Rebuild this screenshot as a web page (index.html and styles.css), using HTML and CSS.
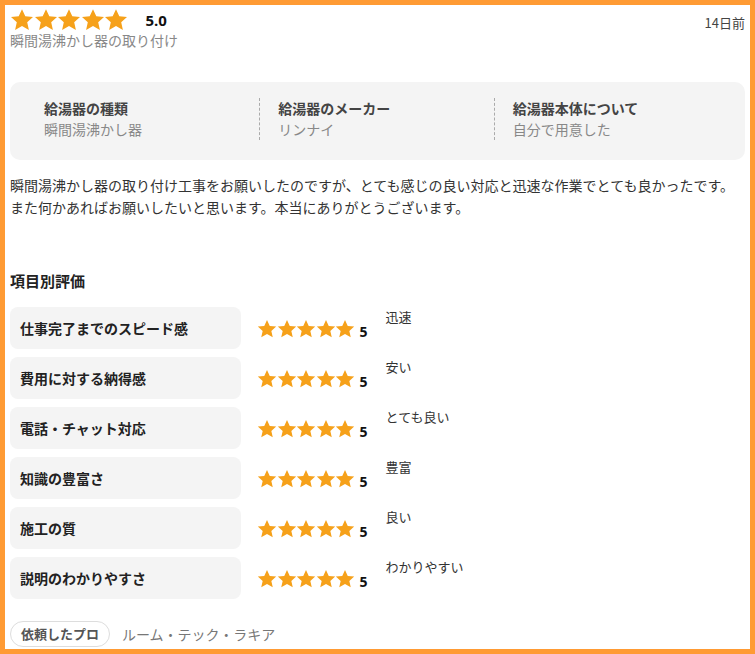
FILE: index.html
```html
<!DOCTYPE html>
<html lang="ja">
<head>
  <meta charset="UTF-8" />
  <meta name="viewport" content="width=device-width, initial-scale=1.0"/>
  <title>口コミ</title>
  <link rel="stylesheet" href="styles.css">
</head>
<body>

<svg width="0" height="0" class="defs">
  <defs>
    <symbol id="star" viewBox="0 0 24 24">
      <path d="M12 1.2l3.3 7.1 7.7.8-5.8 5.2 1.7 7.6L12 18l-6.9 3.9 1.7-7.6L1 9.1l7.7-.8z"/>
    </symbol>
  </defs>
</svg>

<div class="review">
  <div class="head">
    <div class="head-main">
      <div class="rating">
        <div class="stars big">
          <svg><use href="#star"/></svg><svg><use href="#star"/></svg><svg><use href="#star"/></svg><svg><use href="#star"/></svg><svg><use href="#star"/></svg>
        </div>
        <span class="score">5.0</span>
      </div>
      <div class="subject">瞬間湯沸かし器の取り付け</div>
    </div>
    <div class="date">14日前</div>
  </div>

  <div class="info">
    <div class="info-col">
      <div class="info-title">給湯器の種類</div>
      <div class="info-value">瞬間湯沸かし器</div>
    </div>
    <div class="info-col">
      <div class="info-title">給湯器のメーカー</div>
      <div class="info-value">リンナイ</div>
    </div>
    <div class="info-col">
      <div class="info-title">給湯器本体について</div>
      <div class="info-value">自分で用意した</div>
    </div>
  </div>

  <p class="comment">瞬間湯沸かし器の取り付け工事をお願いしたのですが、とても感じの良い対応と迅速な作業でとても良かったです。また何かあればお願いしたいと思います。本当にありがとうございます。</p>

  <h3>項目別評価</h3>
  <div class="items">
    <div class="item">
      <div class="item-label">仕事完了までのスピード感</div>
      <div class="stars small"><svg><use href="#star"/></svg><svg><use href="#star"/></svg><svg><use href="#star"/></svg><svg><use href="#star"/></svg><svg><use href="#star"/></svg></div>
      <span class="item-score">5</span>
      <span class="item-note">迅速</span>
    </div>
    <div class="item">
      <div class="item-label">費用に対する納得感</div>
      <div class="stars small"><svg><use href="#star"/></svg><svg><use href="#star"/></svg><svg><use href="#star"/></svg><svg><use href="#star"/></svg><svg><use href="#star"/></svg></div>
      <span class="item-score">5</span>
      <span class="item-note">安い</span>
    </div>
    <div class="item">
      <div class="item-label">電話・チャット対応</div>
      <div class="stars small"><svg><use href="#star"/></svg><svg><use href="#star"/></svg><svg><use href="#star"/></svg><svg><use href="#star"/></svg><svg><use href="#star"/></svg></div>
      <span class="item-score">5</span>
      <span class="item-note">とても良い</span>
    </div>
    <div class="item">
      <div class="item-label">知識の豊富さ</div>
      <div class="stars small"><svg><use href="#star"/></svg><svg><use href="#star"/></svg><svg><use href="#star"/></svg><svg><use href="#star"/></svg><svg><use href="#star"/></svg></div>
      <span class="item-score">5</span>
      <span class="item-note">豊富</span>
    </div>
    <div class="item">
      <div class="item-label">施工の質</div>
      <div class="stars small"><svg><use href="#star"/></svg><svg><use href="#star"/></svg><svg><use href="#star"/></svg><svg><use href="#star"/></svg><svg><use href="#star"/></svg></div>
      <span class="item-score">5</span>
      <span class="item-note">良い</span>
    </div>
    <div class="item">
      <div class="item-label">説明のわかりやすさ</div>
      <div class="stars small"><svg><use href="#star"/></svg><svg><use href="#star"/></svg><svg><use href="#star"/></svg><svg><use href="#star"/></svg><svg><use href="#star"/></svg></div>
      <span class="item-score">5</span>
      <span class="item-note">わかりやすい</span>
    </div>
  </div>

  <div class="pro">
    <span class="pro-tag">依頼したプロ</span>
    <span class="pro-name">ルーム・テック・ラキア</span>
  </div>
</div>

</body>
</html>
```

FILE: styles.css
```css
body {
  margin: 0;
  font-family: "Noto Sans CJK JP", "Noto Sans", sans-serif;
  color: #333;
  background: #fff;
}
.defs {
  position: absolute;
}
.review {
  box-sizing: border-box;
  width: 755px;
  height: 654px;
  border: 5px solid #ff9b34;
  padding: 3px 5px 0 5px;
  overflow: hidden;
}
.head {
  display: flex;
  justify-content: space-between;
}
.rating {
  display: flex;
  align-items: center;
  height: 24px;
}
.stars {
  display: flex;
  fill: #f6a11a;
}
.stars.big svg {
  width: 24px;
  height: 24px;
  margin-right: -0.5px;
}
.score {
  margin-left: 18px;
  font-family: "Open Sans", sans-serif;
  font-weight: bold;
  font-size: 15px;
  color: #111;
}
.subject {
  font-size: 14px;
  color: #888;
  line-height: 18px;
  margin-top: -1px;
}
.date {
  font-size: 13px;
  color: #444;
  padding-top: 5px;
}
.info {
  display: flex;
  background: #f4f4f4;
  border-radius: 10px;
  margin-top: 33px;
  padding: 16px 17px 20px 16px;
}
.info-col {
  flex: 1;
  padding-left: 18px;
  height: 42px;
}
.info-col + .info-col {
  border-left: 1px dashed #aaa;
}
.info-title {
  font-size: 14px;
  font-weight: bold;
  color: #444;
  line-height: 20px;
}
.info-value {
  font-size: 14px;
  color: #888;
  line-height: 22px;
}
.comment {
  font-size: 14px;
  line-height: 22px;
  margin: 14px 0 0;
  color: #333;
}
h3 {
  font-size: 15px;
  font-weight: bold;
  color: #222;
  margin: 52px 0 0;
  line-height: 22px;
}
.items {
  display: flex;
  flex-direction: column;
  gap: 8px;
  margin-top: 15px;
}
.item {
  display: flex;
  align-items: center;
  height: 42px;
}
.item-label {
  box-sizing: border-box;
  width: 231px;
  height: 42px;
  background: #f4f4f4;
  border-radius: 8px;
  padding-left: 10px;
  display: flex;
  align-items: center;
  font-size: 14px;
  font-weight: bold;
  color: #222;
}
.stars.small {
  margin-left: 16px;
  margin-top: 2px;
}
.stars.small svg {
  width: 20px;
  height: 20px;
  margin-right: -0.5px;
}
.item-score {
  font-family: "Open Sans", sans-serif;
  font-weight: bold;
  font-size: 14px;
  color: #111;
  margin-left: 5px;
  margin-top: 6px;
}
.item-note {
  align-self: flex-start;
  font-size: 13px;
  color: #333;
  margin-left: 18px;
  margin-top: 0;
}
.pro {
  display: flex;
  align-items: center;
  margin-top: 22px;
}
.pro-tag {
  border: 1px solid #ddd;
  border-radius: 13px;
  padding: 2px 10px;
  font-size: 13px;
  font-weight: bold;
  color: #555;
  line-height: 20px;
}
.pro-name {
  margin-left: 12px;
  font-size: 14px;
  color: #777;
}
```
